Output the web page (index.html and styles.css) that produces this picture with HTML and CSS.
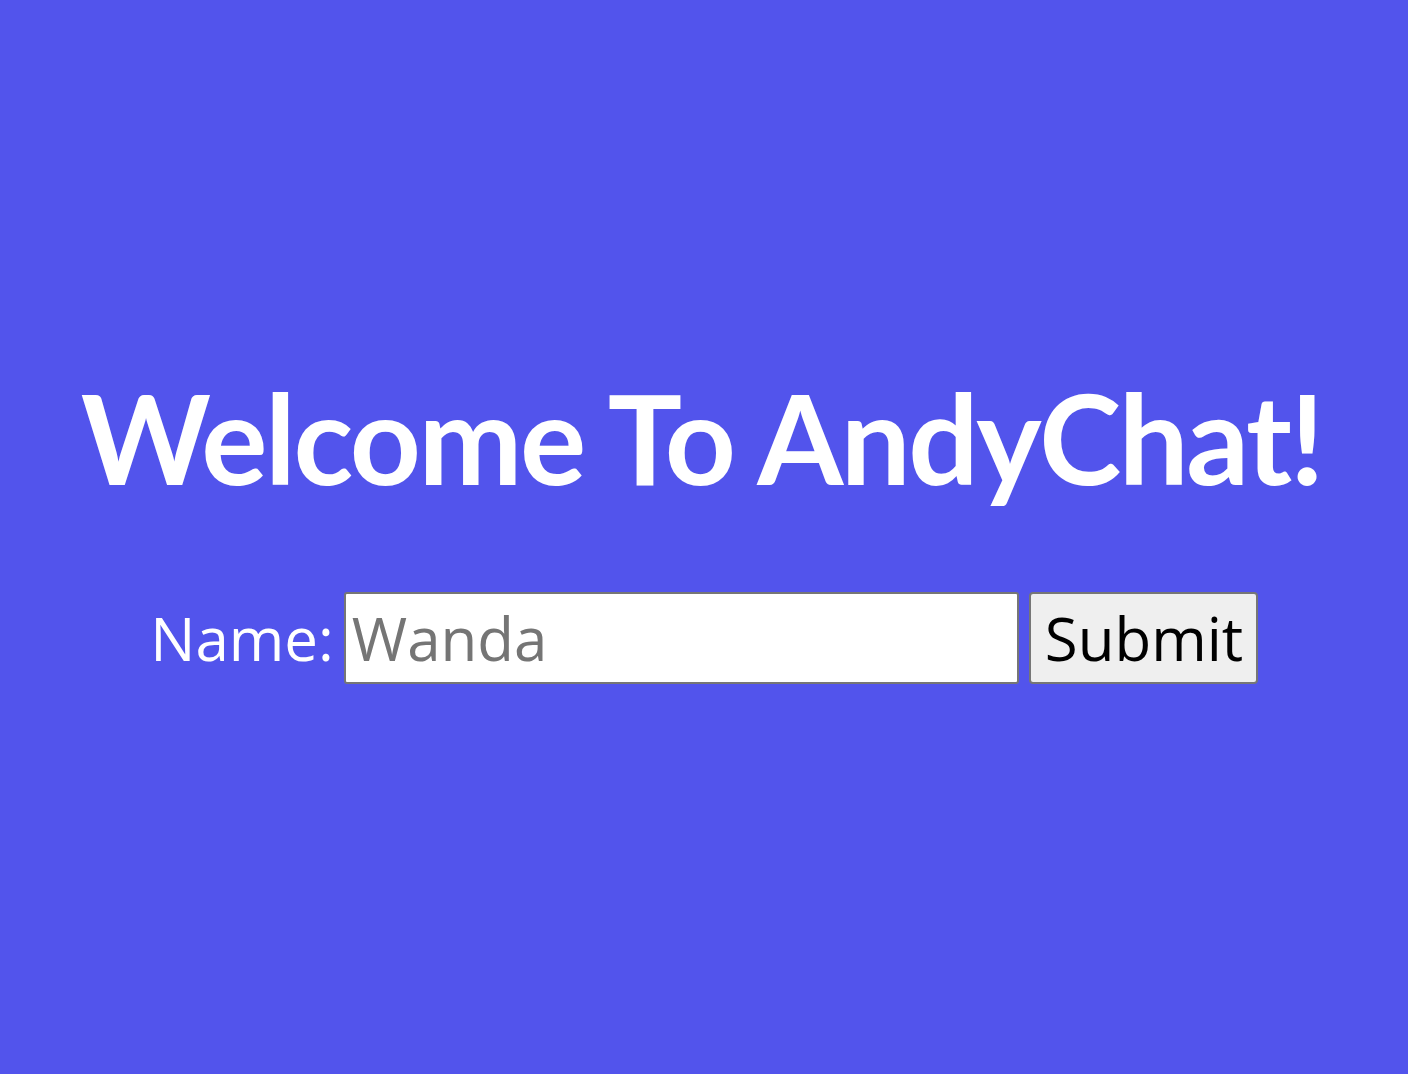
FILE: index.html
```html
<!DOCTYPE html>
<html lang="en">
<head>
<meta charset="utf-8">
<title>AndyChat</title>
<link rel="stylesheet" href="styles.css">
</head>
<body>
<main class="page">
  <h1 class="title">Welcome To AndyChat!</h1>
  <form class="name-form" onsubmit="return false">
    <label class="name-label" for="name">Name:</label>
    <input class="name-input" id="name" type="text" placeholder="Wanda">
    <button class="submit-btn" type="submit">Submit</button>
  </form>
</main>
</body>
</html>
```
FILE: styles.css
```css
html, body {
  margin: 0;
  padding: 0;
}
body {
  background: #5254ec;
  font-family: "Open Sans", "Liberation Sans", sans-serif;
}
.page {
  min-height: 100vh;
  box-sizing: border-box;
  padding-bottom: 27px;
  display: flex;
  flex-direction: column;
  align-items: center;
  justify-content: center;
  gap: 80px;
}
.title {
  margin: 0 0 0 -5px;
  font-family: Lato, "Liberation Sans", sans-serif;
  font-weight: 700;
  font-size: 124px;
  line-height: 1.2;
  color: #ffffff;
  letter-spacing: -2.4px;
}
.name-form {
  display: flex;
  align-items: center;
  gap: 10px;
}
.name-label {
  font-size: 60px;
  color: #ffffff;
  line-height: 1;
}
.name-input {
  box-sizing: border-box;
  width: 675px;
  height: 92px;
  padding: 0 6px;
  font-family: "Open Sans", "Liberation Sans", sans-serif;
  font-size: 60px;
  color: #333;
  background: #fff;
  border: 2px solid #767676;
  border-radius: 3px;
  outline: none;
}
.name-input::placeholder {
  color: #757575;
}
.submit-btn {
  box-sizing: border-box;
  height: 92px;
  width: 229px;
  padding: 0 14px;
  font-family: "Open Sans", "Liberation Sans", sans-serif;
  font-size: 60px;
  color: #000;
  background: #efefef;
  border: 2px solid #767676;
  border-radius: 4px;
}
```
